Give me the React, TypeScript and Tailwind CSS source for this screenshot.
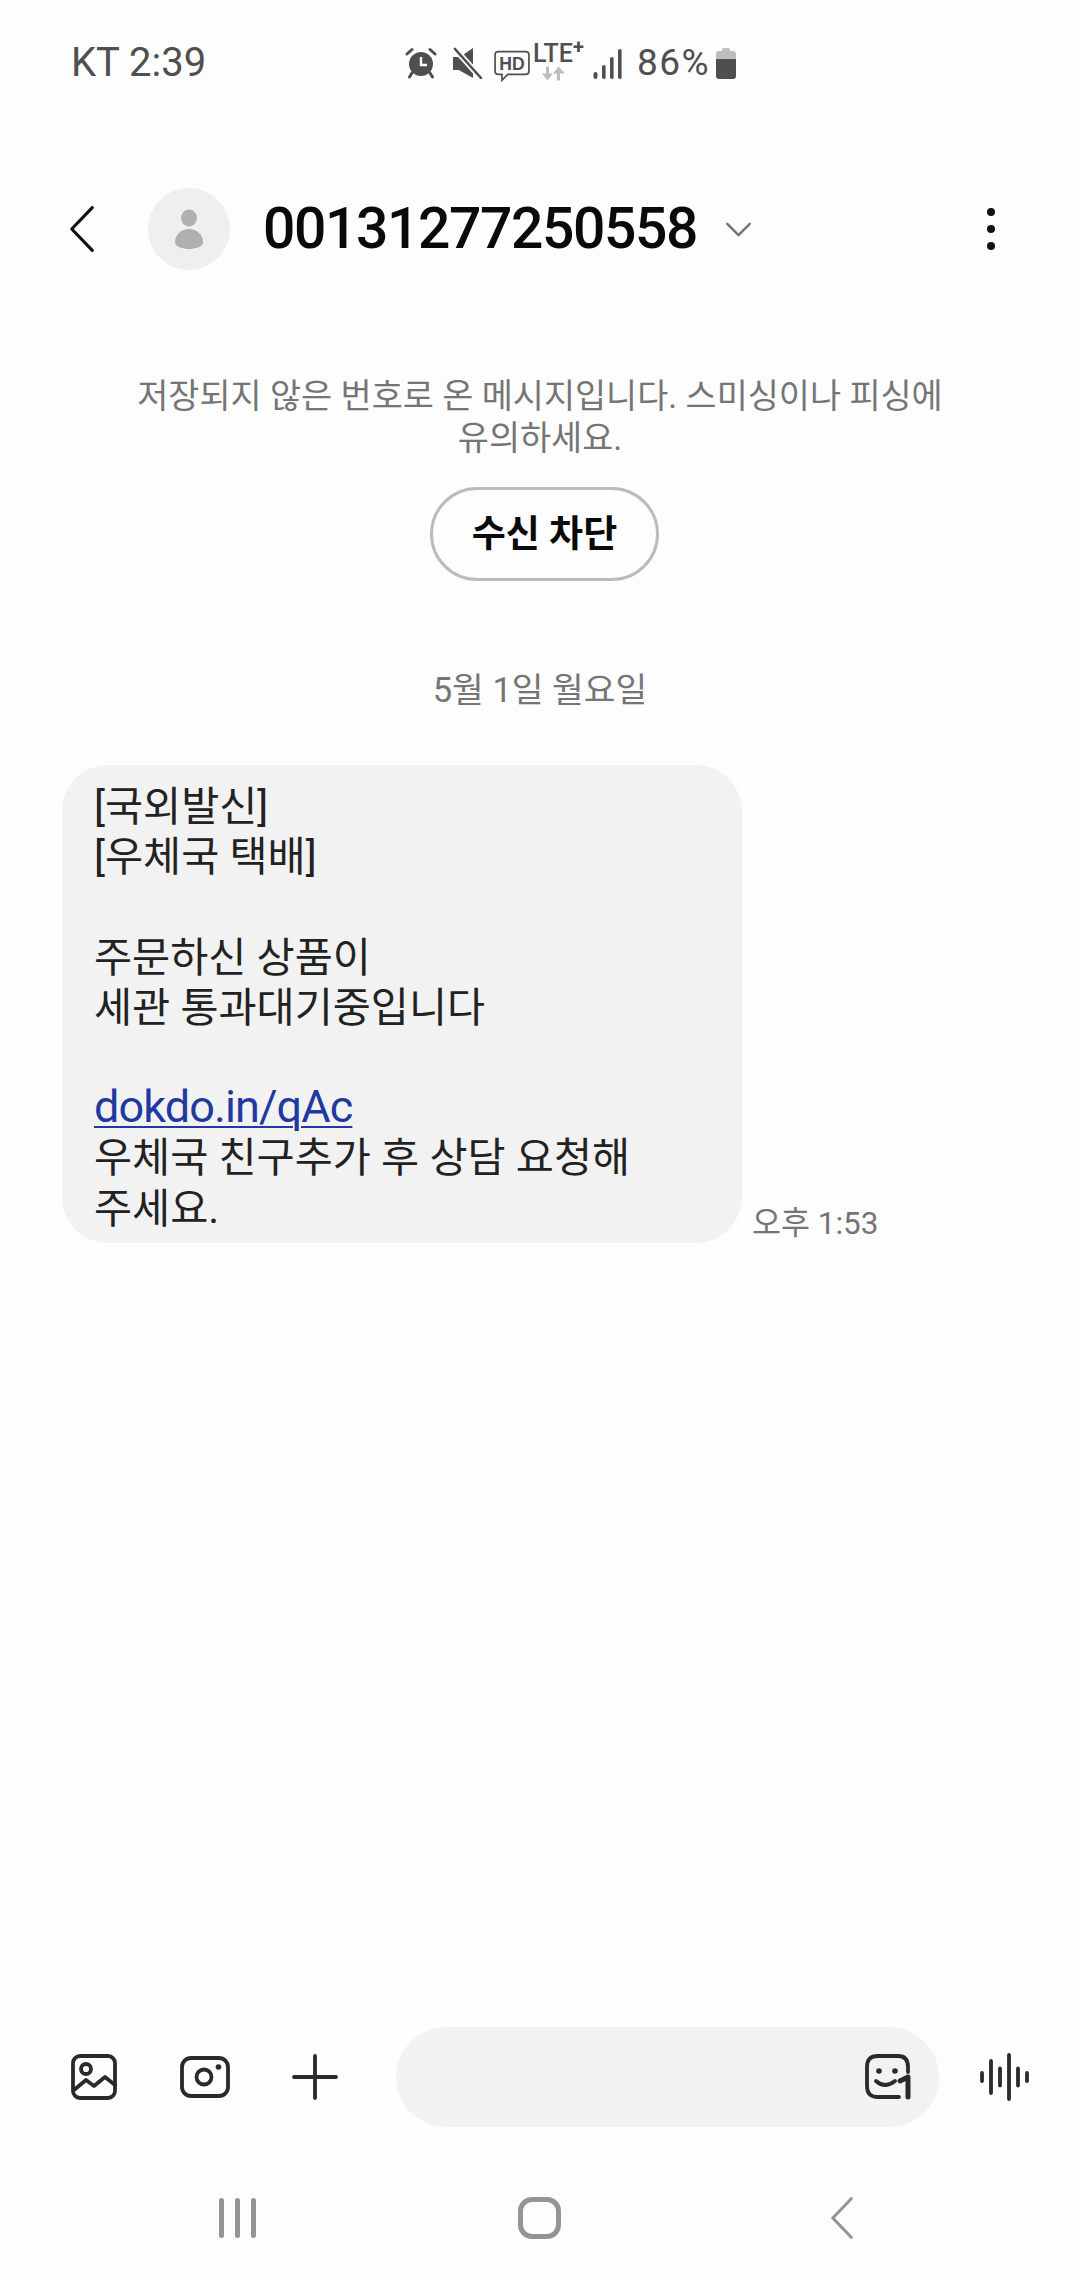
function Back({ className, w = 3 }: { className: string; w?: number }) {
  return (
    <svg viewBox="0 0 30 50" className={className} fill="none" stroke="currentColor" strokeWidth={w} strokeLinecap="round" strokeLinejoin="round">
      <path d="M26 2 L4 25 L26 48" />
    </svg>
  );
}

function StatusIcons() {
  return (
    <div className="flex items-center text-[#4f4f4f]">
      <svg viewBox="0 0 32 32" className="w-[32px] h-[32px] mr-[14px]" fill="currentColor">
        <circle cx="16" cy="17" r="12" />
        <path d="M2 7 L7 2.5 M30 7 L25 2.5 M7 26 L4.5 30 M25 26 L27.5 30" stroke="currentColor" strokeWidth="3" strokeLinecap="round" fill="none" />
        <path d="M16 10 V18 H22" stroke="#fdfdfd" strokeWidth="2.4" fill="none" />
      </svg>
      <svg viewBox="0 0 32 32" className="w-[32px] h-[32px] mr-[11px]" fill="currentColor">
        <path d="M2 10 H9 L22 1 V23 L10 23 H2 Z" />
        <path d="M6 22 L22 31 V14 Z" />
        <path d="M4 2 L30 31" stroke="#fdfdfd" strokeWidth="6" fill="none" />
        <path d="M4 2 L30 31" stroke="currentColor" strokeWidth="2.6" strokeLinecap="round" fill="none" />
      </svg>
      <svg viewBox="0 0 34 30" className="w-[36px] h-[32px] mt-[5px] mr-[3px]" fill="none" stroke="currentColor">
        <path d="M4 1.5 H30 Q33 1.5 33 4.5 V20 Q33 23 30 23 H13 L7.5 28.5 V23 H4 Q1 23 1 20 V4.5 Q1 1.5 4 1.5 Z" strokeWidth="1.6" />
        <text x="17" y="18.5" textAnchor="middle" fill="currentColor" stroke="none" fontSize="17" fontWeight="700" fontFamily="'Liberation Sans','Roboto',sans-serif" textLength="24" lengthAdjust="spacingAndGlyphs">HD</text>
      </svg>
      <div className="relative w-[52px] h-[38px] mr-[8px]">
        <span className="absolute left-[0px] top-[-4px] font-['Roboto',sans-serif] font-medium text-[25px] leading-[28px]">LTE</span>
        <span className="absolute left-[40px] top-[-7px] font-['Roboto',sans-serif] text-[20px] font-bold leading-[20px]">+</span>
        <svg viewBox="0 0 26 14" className="absolute left-[8px] top-[22px] w-[26px] h-[15px] text-[#bdbdbd]" fill="currentColor">
          <path d="M5 0 H8 V7 H12 L6.5 14 L1 7 H5 Z" />
          <path d="M16 14 H19 V7 H24 L17.5 0 L12 7 H16 Z" />
        </svg>
      </div>
      <svg viewBox="0 0 30 32" className="w-[30px] h-[32px] mt-[2px]" fill="currentColor">
        <rect x="0.5" y="24" width="4" height="7" rx="2" />
        <rect x="9" y="17" width="3.6" height="14" rx="1.8" />
        <rect x="17" y="9" width="3.6" height="22" rx="1.8" />
        <rect x="25" y="1" width="3.6" height="30" rx="1.8" />
      </svg>
      <span className="font-['Roboto',sans-serif] text-[37px] leading-[40px] ml-[14px] tracking-[1.4px]">86%</span>
      <svg viewBox="0 0 22 32" className="w-[22px] h-[32px] ml-[5px]" fill="currentColor">
        <path d="M7 3 Q7 1 9 1 H13 Q15 1 15 3 V4 H18 Q21 4 21 7 V12 H1 V7 Q1 4 4 4 H7 Z" fill="#bdbdbd" />
        <path d="M1 12 H21 V29 Q21 32 18 32 H4 Q1 32 1 29 Z" />
      </svg>
    </div>
  );
}

export default function App() {
  return (
    <div className="w-[1080px] h-[2280px] bg-[#fdfdfd] flex flex-col overflow-hidden font-['Roboto','Noto_Sans_CJK_KR',sans-serif] text-[#252525]">
      {/* status bar */}
      <div className="h-[124px] pt-[41px] pl-[71px] pr-[343px] flex items-start justify-between shrink-0">
        <span className="font-['Roboto',sans-serif] text-[40px] leading-[44px] text-[#4f4f4f] tracking-[0px]">KT 2:39</span>
        <div className="pt-[2px]"><StatusIcons /></div>
      </div>

      {/* header */}
      <div className="h-[110px] flex items-center pl-[68px] pr-[85px] shrink-0 mt-[50px]">
        <Back className="w-[28px] h-[50px] text-[#111]" w={3.4} />
        <div className="ml-[52px] w-[82px] h-[82px] rounded-full bg-[#efefef] flex items-center justify-center">
          <svg viewBox="0 0 28 40" className="w-[28px] h-[42px] text-[#b0b0b0]" fill="currentColor">
            <ellipse cx="14" cy="9" rx="8" ry="8.5" />
            <path d="M14 20 C22 20 28 26 28 33 C28 38 20 40 14 40 C8 40 0 38 0 33 C0 26 6 20 14 20 Z" />
          </svg>
        </div>
        <span className="ml-[33px] text-[57px] leading-[60px] font-medium text-[#0a0a0a] font-['Roboto',sans-serif] tracking-[-1.4px]">00131277250558</span>
        <svg viewBox="0 0 28 16" className="ml-[28px] w-[27px] h-[15px] text-[#757575]" fill="none" stroke="currentColor" strokeWidth="2.6" strokeLinecap="round" strokeLinejoin="round">
          <path d="M2 2 L14 14 L26 2" />
        </svg>
        <div className="ml-auto flex flex-col gap-[9px]">
          <div className="w-[8px] h-[8px] rounded-full bg-[#111]" />
          <div className="w-[8px] h-[8px] rounded-full bg-[#111]" />
          <div className="w-[8px] h-[8px] rounded-full bg-[#111]" />
        </div>
      </div>

      {/* messages */}
      <div className="flex-1 flex flex-col min-h-0">
        <div className="flex flex-col items-center mt-[92px]">
          <p className="text-[33.8px] leading-[42px] text-[#757575] text-center w-[880px]">저장되지 않은 번호로 온 메시지입니다. 스미싱이나 피싱에<br />유의하세요.</p>
          <div className="mt-[27px] ml-[9px] w-[229px] h-[94px] pt-[2px] rounded-full border-[3px] border-[#bbbbbb] flex items-center justify-center text-[37px] font-bold text-[#0a0a0a]">수신 차단</div>
        </div>
        <p className="mt-[89px] text-center text-[34.5px] leading-[40px] text-[#757575]">5월 1일 월요일</p>
        <div className="mt-[55px] ml-[62px] flex items-end">
          <div className="w-[680px] h-[478px] rounded-[46px] bg-[#f2f2f2] pl-[32px] pt-[17px] text-[41.4px] leading-[50.2px] text-[#222]">
            [국외발신]<br />[우체국 택배]<br /><br />주문하신 상품이<br />세관 통과대기중입니다<br /><br />
            <span className="text-[#21399f] underline underline-offset-[4px] decoration-[2px] text-[45px] leading-none tracking-[-0.9px]">dokdo.in/qAc</span><br />
            우체국 친구추가 후 상담 요청해<br />주세요.
          </div>
          <span className="ml-[10px] mb-[-1px] text-[31.5px] leading-[40px] text-[#757575]">오후 1:53</span>
        </div>
      </div>

      {/* input */}
      <div className="h-[100px] shrink-0 flex items-center pl-[71px] pr-[48px]">
        <svg viewBox="0 0 46 46" className="w-[46px] h-[46px]" fill="none" stroke="#2a2a2a" strokeWidth="3.8" strokeLinecap="round" strokeLinejoin="round">
          <rect x="2" y="2" width="42" height="42" rx="7" />
          <circle cx="15" cy="15" r="5" />
          <path d="M3 36 L15 26 L23 32 L34 23 L44 31" />
        </svg>
        <svg viewBox="0 0 50 42" className="ml-[63px] w-[50px] h-[42px]" fill="none" stroke="#2a2a2a" strokeWidth="3.8">
          <rect x="2" y="2" width="46" height="38" rx="9" />
          <circle cx="24" cy="21" r="7.5" />
          <circle cx="38.5" cy="11" r="2.8" fill="#2a2a2a" stroke="none" />
        </svg>
        <svg viewBox="0 0 46 46" className="ml-[62px] w-[46px] h-[46px]" fill="none" stroke="#2a2a2a" strokeWidth="3.8" strokeLinecap="round">
          <path d="M23 2 V44 M2 23 H44" />
        </svg>
        <div className="ml-[58px] w-[543px] h-[100px] rounded-full bg-[#f2f2f2] flex items-center justify-end pr-[28px]">
          <svg viewBox="0 0 46 46" className="w-[46px] h-[46px]" fill="none" stroke="#2a2a2a" strokeWidth="3.8" strokeLinecap="round" strokeLinejoin="round">
            <path d="M34 43 H13 Q2 43 2 32 V13 Q2 2 13 2 H33 Q43 2 43 13 V18" />
            <path d="M11 27 Q20 35 30 27" />
            <circle cx="14" cy="17" r="2.8" fill="#2a2a2a" stroke="none" />
            <circle cx="30" cy="17" r="2.8" fill="#2a2a2a" stroke="none" />
            <path d="M35 27 L43 23 V43" strokeWidth="5" />
          </svg>
        </div>
        <svg viewBox="0 0 50 48" className="ml-[41px] w-[50px] h-[48px]" fill="none" stroke="#2a2a2a" strokeWidth="3.8" strokeLinecap="round">
          <path d="M2 20 V28 M11 8 V40 M20 15.5 V32.5 M29 2 V46 M38 15.5 V32.5 M47 20 V28" />
        </svg>
      </div>

      {/* nav */}
      <div className="h-[153px] shrink-0 pt-[63px]">
        <div className="flex items-center h-[56px] pl-[219px]">
          <div className="flex gap-[11px]">
            <div className="w-[5px] h-[40px] rounded-full bg-[#949494]" />
            <div className="w-[5px] h-[40px] rounded-full bg-[#949494]" />
            <div className="w-[5px] h-[40px] rounded-full bg-[#949494]" />
          </div>
          <div className="ml-[262px] w-[43px] h-[42px] rounded-[14px] border-[5px] border-[#949494]" />
          <Back className="ml-[268px] w-[26px] h-[42px] text-[#949494]" w={3.6} />
        </div>
      </div>
    </div>
  );
}
